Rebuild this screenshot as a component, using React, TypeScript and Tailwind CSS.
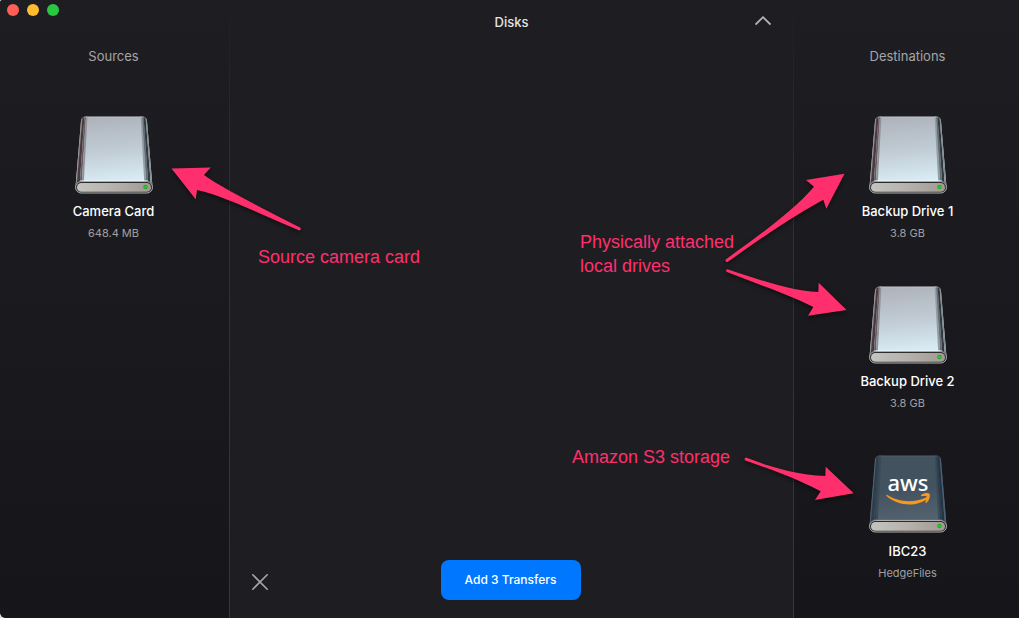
import React from 'react';

interface Disk {
  id: number;
  name: string;
  detail: string;
  kind: 'drive' | 'aws';
}

const sources: Disk[] = [
  { id: 1, name: 'Camera Card', detail: '648.4 MB', kind: 'drive' },
];

const destinations: Disk[] = [
  { id: 2, name: 'Backup Drive 1', detail: '3.8 GB', kind: 'drive' },
  { id: 3, name: 'Backup Drive 2', detail: '3.8 GB', kind: 'drive' },
  { id: 4, name: 'IBC23', detail: 'HedgeFiles', kind: 'aws' },
];

const DriveIcon: React.FC<{ id: string; aws?: boolean }> = ({ id, aws }) => (
  <svg viewBox={aws ? '0 0 80 80' : '0 -1 80 80'} className="h-20 w-20" aria-hidden="true">
    <defs>
      <linearGradient id={`${id}-face`} x1="0.1" y1="0" x2="0.2" y2="1">
        <stop offset="0" stopColor={aws ? '#445260' : '#adb1b9'} />
        <stop offset="0.5" stopColor={aws ? '#43525f' : '#c0cbd4'} />
        <stop offset="1" stopColor={aws ? '#566471' : '#dcf0f8'} />
      </linearGradient>
      <linearGradient id={`${id}-base`} x1="0" x2="1">
        <stop offset="0" stopColor="#c4c4c0" />
        <stop offset="0.55" stopColor="#b5afa9" />
        <stop offset="1" stopColor="#a09a94" />
      </linearGradient>
      <clipPath id={`${id}-body`}>
        <path d="M12 0.500 H68 Q72.500 0.500 73 5 L78.500 71 H1.500 L7 5 Q7.500 0.500 12 0.500Z" />
      </clipPath>
    </defs>
    <g clipPath={`url(#${id}-body)`}>
      <rect width="80" height="72" fill={`url(#${id}-face)`} />
      {/* bevelled left side, outer edge first */}
      <path d="M6 0 H8.500 L3 71 H0Z" fill={aws ? '#4c6172' : '#8d9093'} />
      <path d="M8.500 0 H10.500 L5.500 71 H2.500Z" fill={aws ? '#2d3d4c' : '#4a3a3e'} />
      <path d="M10.500 0 H12 L7.500 71 H5.500Z" fill={aws ? '#33444f' : '#6b5a60'} />
      <path d="M12 0 H13.500 L9.500 71 H7.500Z" fill={aws ? '#3b4a58' : '#8f9299'} />
      {/* right side */}
      <path d="M66.500 0 H68 L72.500 71 H70.500Z" fill={aws ? '#3b4b59' : '#939da5'} />
      <path d="M68 0 H69.500 L74.500 71 H72.500Z" fill={aws ? '#2d3e4e' : '#616d75'} />
      <path d="M69.500 0 H71.500 L77 71 H74.500Z" fill={aws ? '#243545' : '#323a40'} />
      <path d="M71.500 0 H75 L80 71 H77Z" fill={aws ? '#4c6070' : '#858e93'} />
      <path d="M9 1 H71" stroke={aws ? '#5d6b78' : '#cbd0d4'} strokeWidth="1" opacity="0.5" />
      <path d="M6 64.500 H74" stroke={aws ? '#617484' : '#eefaff'} strokeWidth="1" opacity="0.5" />
    </g>
    <rect x="1" y="65" width="78" height="12.500" rx="6.250" fill="#2c2c2c" />
    <rect x="1.500" y="65.500" width="77" height="11.500" rx="5.750" fill="none" stroke="#b7bab9" strokeWidth="0.900" />
    <rect x="3" y="67" width="74" height="8.800" rx="4.400" fill={`url(#${id}-base)`} />
    <circle cx="71.500" cy="71" r="2.200" fill="#4f8a3d" />
    <circle cx="71.500" cy="71" r="1.500" fill="#12d51c" />
    {aws && (
      <>
        <text x="40" y="36" textAnchor="middle" fontSize="22" fontWeight="500" fill="#ffffff" className="font-['Noto_Sans',sans-serif]">
          aws
        </text>
        <path d="M19 39.800 C30 47.200 46 48.600 58.500 42.200 Q60.200 41.800 59.600 43.400 C48 53 29 50.500 18.500 41 Q18 39.800 19 39.800Z" fill="#f7981d" />
        <path d="M53.300 39.800 C56 37.800 60.200 37.700 61.700 38.900 C62.400 41.800 61 45.600 58.500 47.700 C57.600 48.200 57 47.600 57.400 46.700 C58.300 44.500 59 42.200 58.600 41.500 C57.800 40.800 56 41 54 41.200 C53 41.200 52.700 40.400 53.300 39.800Z" fill="#f7981d" />
      </>
    )}
  </svg>
);

const DiskList: React.FC<{ title: string; disks: Disk[] }> = ({ title, disks }) => (
  <section className="text-center">
    <h2 className="text-[13px] leading-5 text-[#a5a5a7]">{title}</h2>
    <ul className="mt-[49px] flex flex-col gap-11">
      {disks.map((disk) => (
        <li key={disk.id} className="flex flex-col items-center">
          <DriveIcon id={`disk-${disk.id}`} aws={disk.kind === 'aws'} />
          <h3 className="mt-1.5 text-[13px] leading-5 font-medium text-white">{disk.name}</h3>
          <p className="mt-1 text-[11px] leading-4 text-[#a0a0a2]">{disk.detail}</p>
        </li>
      ))}
    </ul>
  </section>
);

const Divider = () => (
  <div className="w-px shrink-0 bg-linear-to-b from-[#1e1e22] via-[#2d2d31] via-25% to-[#38383c]" />
);

const arrowStyle = 'fill-[#ff2f6d] drop-shadow-[0_2px_2px_rgba(0,0,0,0.5)]';

// Notes that sit on top of the window
const Annotations = () => (
  <div className="pointer-events-none absolute inset-0 font-['Liberation_Sans',Arial,sans-serif] text-lg leading-6 text-[#ff2f6d]">
    <svg viewBox="160 155 160 90" className="absolute top-[155px] left-[160px] h-[90px] w-40" aria-hidden="true">
      <path className={arrowStyle} d="M171.500 168.500 L210.700 167.500 L204 175 C222 188 260 207 300 227.500 Q302 229.500 299.500 230.500 C264 216 225 196 197 190 L195.700 199.300Z" />
    </svg>
    <p className="absolute top-[245px] left-[258px]">Source camera card</p>

    <svg viewBox="719 160 300 350" className="absolute top-40 right-0 h-[350px] w-[300px]" aria-hidden="true">
      <path className={arrowStyle} d="M844.500 173.700 L806 180 L814 186.700 C796 208 760 235 725.700 259.500 Q725 262 727.500 262 C760 239 790 218 823.300 199.700 L826.300 208.700Z" />
      <path className={arrowStyle} d="M846.500 310 L818.700 282.700 L818.300 292 C791 291 760 280 727.300 269.300 Q725 270.500 727 272 C757 284 788 294 813.300 307 L808 315.700Z" />
      <path className={arrowStyle} d="M853.700 493.300 L825.700 466.700 L825.300 476 C798 475 770 467 746 457.500 Q743.500 459 745.500 460.500 C770 469 797 479 820.700 491.300 L815 500Z" />
    </svg>
    <p className="absolute top-[230px] right-[285px]">
      Physically attached
      <br />
      local drives
    </p>
    <p className="absolute top-[445px] right-[289px]">Amazon S3 storage</p>
  </div>
);

export default function App() {
  return (
    <div className="bg-[#d8d8d8] font-['Inter',sans-serif]">
      <div className="relative flex min-h-screen overflow-hidden rounded-tl-[3px] rounded-bl-md bg-[#1e1e22]">
        <aside className="w-[229px] shrink-0 bg-linear-to-b from-[#1e1e22] to-[#16161a] pr-0.5">
          <div className="flex h-[46px] gap-2 pt-1 pl-[7px]">
            <button type="button" aria-label="Close window" className="size-3 rounded-full bg-[#ff5f57]" />
            <button type="button" aria-label="Minimize window" className="size-3 rounded-full bg-[#febc2e]" />
            <button type="button" aria-label="Zoom window" className="size-3 rounded-full bg-[#28c840]" />
          </div>
          <DiskList title="Sources" disks={sources} />
        </aside>
        <Divider />

        <main className="flex flex-1 flex-col justify-between">
          <header className="flex h-11 items-center px-[22px]">
            <div className="flex-1" />
            <h1 className="text-[13px] leading-5 font-medium text-[#e4e4e5]">Disks</h1>
            <div className="flex flex-1 justify-end">
              <button type="button" aria-label="Collapse">
                <svg viewBox="0 0 16 12" className="h-3 w-4" fill="none" stroke="#b4b4b6" strokeWidth="1.800" aria-hidden="true">
                  <path d="M0.500 8.500 L8 1.200 L15.500 8.500" />
                </svg>
              </button>
            </div>
          </header>

          <footer className="flex items-center pr-6 pb-[18px] pl-[22px]">
            <div className="flex flex-1">
              <button type="button" aria-label="Cancel" className="pt-1">
                <svg viewBox="0 0 16 16" className="size-4" fill="none" stroke="#a6a6a8" strokeWidth="1.600" strokeLinecap="round" aria-hidden="true">
                  <path d="M0.800 0.800 L15.200 15.200 M15.200 0.800 L0.800 15.200" />
                </svg>
              </button>
            </div>
            <button type="button" className="h-10 w-[140px] rounded-lg bg-[#0077ff] text-xs font-medium text-white">
              Add 3 Transfers
            </button>
            <div className="flex-1" />
          </footer>
        </main>

        <Divider />
        <aside className="w-[225px] shrink-0 bg-linear-to-b from-[#1e1e22] to-[#16161a] pt-[46px] pl-0.5">
          <DiskList title="Destinations" disks={destinations} />
        </aside>

        <Annotations />
      </div>
    </div>
  );
}
